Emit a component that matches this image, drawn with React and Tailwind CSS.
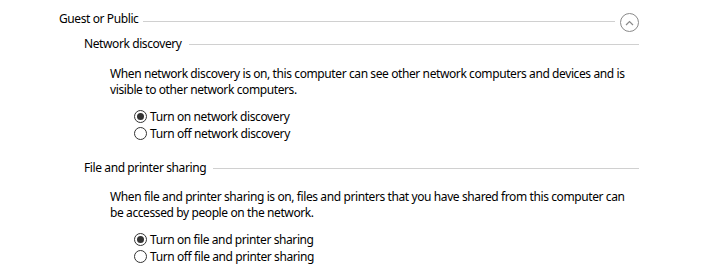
const Radio = ({ checked, label }) => (
  <div className="flex h-[17px] items-center">
    <span className="flex h-[13px] w-[13px] items-center justify-center rounded-full border border-[#333]">
      {checked && <span className="h-[7px] w-[7px] rounded-full bg-[#333]" />}
    </span>
    <span className="ml-[3px] leading-4">{label}</span>
  </div>
);

const SubHeader = ({ title, className }) => (
  <div className={`flex items-center ${className}`}>
    <span className="leading-4 whitespace-nowrap">{title}</span>
    <div className="ml-[7px] h-px flex-1 bg-[#d0d0d0]" />
  </div>
);

export default function App() {
  return (
    <div
      className="h-[280px] w-[723px] bg-white pt-[11px] pl-[59px] text-[12px] tracking-[-0.4px] text-black"
      style={{ fontFamily: '"Noto Sans", "Open Sans", sans-serif' }}
    >
      <div className="w-[580px]">
        <div className="flex items-start">
          <span className="leading-4 whitespace-nowrap">Guest or Public</span>
          <div className="mt-[10px] ml-[5px] h-px flex-1 bg-[#d0d0d0]" />
          <button className="mt-[2px] -mb-[5px] ml-[5px] flex h-[19px] w-[19px] items-center justify-center rounded-full border border-[#8a8a8a]">
            <svg width="9" height="6" viewBox="0 0 9 6" fill="none">
              <path d="M1 5L4.5 1.5L8 5" stroke="#8a8a8a" strokeWidth="1.2" />
            </svg>
          </button>
        </div>

        <div className="ml-[25px]">
          <SubHeader title="Network discovery" className="mt-[9px]" />
          <div className="ml-[26px] mt-[14px] leading-4">
            <div className="whitespace-nowrap">
              When network discovery is on, this computer can see other network computers and devices and is
            </div>
            <div>visible to other network computers.</div>
          </div>
          <div className="ml-[50px] mt-[10px]">
            <Radio checked label="Turn on network discovery" />
            <Radio label="Turn off network discovery" />
          </div>

          <SubHeader title="File and printer sharing" className="mt-[18px]" />
          <div className="ml-[26px] mt-[13px] leading-4">
            <div className="whitespace-nowrap">
              When file and printer sharing is on, files and printers that you have shared from this computer can
            </div>
            <div>be accessed by people on the network.</div>
          </div>
          <div className="ml-[50px] mt-[10px]">
            <Radio checked label="Turn on file and printer sharing" />
            <Radio label="Turn off file and printer sharing" />
          </div>
        </div>
      </div>
    </div>
  );
}
